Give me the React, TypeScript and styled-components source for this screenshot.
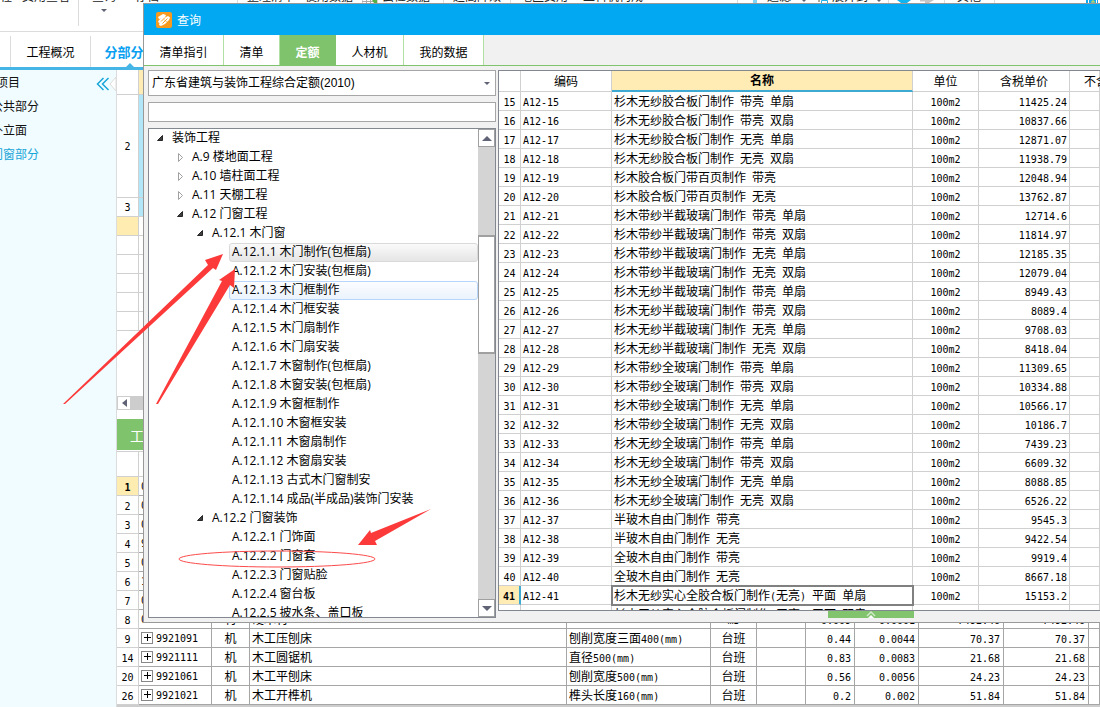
import React from 'react';
import styled, { createGlobalStyle, css } from 'styled-components';

const UI_FONT = '"Liberation Sans", "Noto Sans CJK SC", sans-serif';
const TREE_FONT = '"Open Sans", "Noto Sans CJK SC", sans-serif';
const MONO_FONT = '"DejaVu Sans Mono", "Noto Sans CJK SC", monospace';

const GlobalStyle = createGlobalStyle`
  * { box-sizing: border-box; }
  body { margin: 0; background: #fff; font-family: ${UI_FONT}; font-size: 12px; color: #000; overflow: hidden; }
  button, input, select { font: inherit; color: inherit; margin: 0; }
`;

const Page = styled.div`
  position: relative;
  display: flex;
  flex-direction: column;
  height: 100vh;
  overflow: hidden;
`;

/* ---------- Main window behind the dialog ---------- */

const Ribbon = styled.div`
  display: flex;
  flex: none;
  height: 32px;
  border-bottom: 1px solid #dcdcdc;
  overflow: hidden;
  white-space: nowrap;
`;

const RibbonItem = styled.div<{ $w: number; $line?: boolean }>`
  flex: none;
  width: ${p => p.$w}px;
  height: 26px;
  border-right: ${p => (p.$line ? '1px solid #dcdcdc' : 'none')};
  color: #222;
`;

const RibbonLabel = styled.div`
  height: 16px;
  line-height: 16px;
  margin-top: -11px;
`;

const RibbonArrow = styled.svg`
  display: block;
  margin: 4px 0 0 9px;
`;

const RibbonIcon = styled.svg`
  display: block;
`;

const MainTabs = styled.nav`
  display: flex;
  flex: none;
  height: 38px;
  padding: 4px 0 0 10px;
  border-bottom: 3px solid #45b5e6;
`;

const MainTab = styled.button<{ $active?: boolean }>`
  position: relative;
  width: 80px;
  border: 0;
  border-left: 1px solid #dcdcdc;
  background: #fff;
  padding: 0;
  white-space: nowrap;
  font-size: ${p => (p.$active ? 13 : 12)}px;
  font-weight: ${p => (p.$active ? 700 : 400)};
  color: ${p => (p.$active ? '#0a9ff0' : '#000')};
`;

const TabPointer = styled.svg`
  position: absolute;
  left: 34px;
  bottom: -1px;
`;

const Workspace = styled.div`
  display: flex;
  flex: 1;
  min-height: 0;
`;

const Sidebar = styled.aside`
  position: relative;
  flex: none;
  width: 117px;
  background: #f0fcff;
  border-right: 1px solid #dcdcdc;
  overflow: hidden;
`;

const SideList = styled.ul`
  list-style: none;
  margin: 0;
  padding: 1px 0 0;
`;

const SideItem = styled.li<{ $child?: boolean; $active?: boolean }>`
  height: 24px;
  line-height: 24px;
  margin-left: ${p => (p.$child ? -9 : -28)}px;
  color: ${p => (p.$active ? '#18a6d8' : '#111')};
`;

const CollapseButton = styled.button`
  position: absolute;
  top: 6px;
  right: 0;
  width: 20px;
  height: 16px;
  border: 0;
  padding: 0;
  background: none;
  display: flex;
`;

const Content = styled.main`
  flex: 1;
  min-width: 0;
  overflow: hidden;
`;

const SheetTable = styled.table`
  width: 100%;
  table-layout: fixed;
  border-collapse: separate;
  border-spacing: 0;
  font-family: ${MONO_FONT};
`;

const SheetCell = styled.td<{ $fill?: string; $h?: number }>`
  height: ${p => p.$h ?? 19}px;
  padding: 0;
  border-right: 1px solid #d0d0d0;
  border-bottom: 1px solid #d0d0d0;
  background: ${p => p.$fill ?? '#fff'};
  text-align: center;
  line-height: 16px;
`;

const ScrollRow = styled.div`
  display: flex;
  height: 14px;
  margin-top: 65px;
  background: #cdcdcd;
`;

const ScrollStep = styled.button`
  display: flex;
  align-items: center;
  justify-content: center;
  width: 14px;
  padding: 0;
  border: 1px solid #cdcdcd;
  background: #fff;
`;

const DetailTabs = styled.div`
  display: flex;
  height: 42px;
  padding: 9px 0 1px;
  border-bottom: 1px solid #d0d0d0;
`;

const DetailTab = styled.button`
  width: 96px;
  border: 0;
  padding: 0;
  background: #7fc46c;
  color: #fff;
  font-size: 14px;
`;

const DetailCell = styled.td<{ $align?: string; $num?: boolean; $on?: boolean; $h?: number }>`
  height: ${p => p.$h ?? 19}px;
  padding: 2px ${p => (p.$align === 'right' ? 3 : 2)}px 0;
  border-right: 1px solid ${p => (p.$num ? '#d0d0d0' : '#a6a6a6')};
  border-bottom: 1px solid ${p => (p.$num ? '#d0d0d0' : '#a6a6a6')};
  background: ${p => (p.$on ? '#ffecb0' : '#fff')};
  font-weight: ${p => (p.$on ? 700 : 400)};
  text-align: ${p => p.$align ?? 'left'};
  line-height: 16px;
  white-space: nowrap;
  overflow: hidden;
`;

const CodeBox = styled.div`
  display: flex;
  align-items: center;
  gap: 3px;
  height: 16px;
`;

const PlusBox = styled.svg`
  flex: none;
  margin-bottom: 2px;
`;

const FooterScroll = styled.div`
  height: 14px;
  background: #cdcdcd;
`;

/* ---------- Query dialog ---------- */

const Dialog = styled.section`
  position: absolute;
  top: 3px;
  left: 143px;
  right: 0;
  background: #f1f1f1;
  border: 1px solid #999;
  border-right: 0;
`;

const TitleBar = styled.header`
  display: flex;
  align-items: center;
  gap: 5px;
  height: 31px;
  padding-left: 12px;
  background: #02a8f1;
  color: #fff;
`;

const DialogTabs = styled.nav`
  display: flex;
  height: 31px;
  border-bottom: 1px solid #7fc46c;
`;

const DialogTab = styled.button<{ $w: number; $active?: boolean }>`
  width: ${p => p.$w}px;
  border: 0;
  border-right: 1px solid ${p => (p.$active ? '#7fc46c' : '#b2e0a4')};
  padding: 2px 0 0;
  background: ${p => (p.$active ? '#7fc46c' : '#fff')};
  color: ${p => (p.$active ? '#fff' : '#000')};
  font-weight: ${p => (p.$active ? 700 : 400)};
`;

const Body = styled.div`
  display: flex;
  gap: 2px;
  height: 556px;
  padding: 4px 0 4px 4px;
`;

const LeftPane = styled.div`
  display: flex;
  flex-direction: column;
  flex: none;
  width: 348px;
`;

const SelectWrap = styled.div`
  position: relative;
  height: 26px;
`;

const LibrarySelect = styled.select`
  appearance: none;
  width: 100%;
  height: 26px;
  padding: 0 3px;
  border: 1px solid #a6a6a6;
  border-radius: 0;
  background: #fff;
`;

const SelectArrow = styled.svg`
  position: absolute;
  right: 6px;
  top: 12px;
  pointer-events: none;
`;

const SearchInput = styled.input`
  height: 20px;
  margin: 6px 0;
  border: 1px solid #a6a6a6;
  background: #fff;
`;

const TreeBox = styled.div`
  display: flex;
  flex: 1;
  min-height: 0;
  border: 1px solid #828790;
  background: #fff;
`;

const Tree = styled.ul`
  flex: 1;
  min-width: 0;
  margin: 0;
  padding: 0;
  overflow: hidden;
  list-style: none;
  font-family: ${TREE_FONT};
`;

const TreeRow = styled.li<{ $depth: number }>`
  display: flex;
  align-items: center;
  height: 19px;
  padding-left: ${p => p.$depth * 20 + 6}px;
`;

const Toggle = styled.svg`
  flex: none;
  margin: 0 4px 2px 0;
`;

const TreeLabel = styled.span<{ $state?: string }>`
  flex: 1;
  height: 19px;
  line-height: 15px;
  padding-left: 2px;
  border: 1px solid transparent;
  border-radius: 3px;
  white-space: nowrap;
  ${p => p.$state === 'selected' && css`
    border-color: #d9d9d9;
    background: linear-gradient(#fafafa, #e5e5e5);
  `}
  ${p => p.$state === 'hover' && css`
    border-color: #b8d6fb;
    background: linear-gradient(#fcfdff, #ebf3fd);
  `}
`;

const ScrollBar = styled.div`
  display: flex;
  flex-direction: column;
  flex: none;
  width: 17px;
  background: #d4d4d4;
`;

const ScrollButton = styled.button`
  display: flex;
  align-items: center;
  justify-content: center;
  height: 18px;
  padding: 0;
  border: 1px solid #a0a0a0;
  background: #fff;
`;

const Thumb = styled.div`
  height: 119px;
  margin-top: 88px;
  border: 1px solid #a0a0a0;
  border-width: 2px 1px;
  background: #fff;
`;

const Spacer = styled.div`
  flex: 1;
`;

const RightPane = styled.div`
  display: flex;
  flex-direction: column;
  flex: 1;
  min-width: 0;
`;

const GridBox = styled.div`
  flex: 1;
  min-height: 0;
  overflow: hidden;
  border: 1px solid #828790;
  border-right: 0;
  background: #fff;
`;

const QuotaHead = styled.th<{ $on?: boolean; $cut?: boolean }>`
  height: 21px;
  padding: 2px 0 0 ${p => (p.$cut ? 14 : 0)}px;
  border-right: 1px solid #d0d0d0;
  border-bottom: ${p => (p.$on ? '2px solid #3ea9d2' : '1px solid #d0d0d0')};
  background: ${p => (p.$on ? '#ffecb5' : '#fff')};
  font-weight: ${p => (p.$on ? 700 : 400)};
  text-align: ${p => (p.$cut ? 'left' : 'center')};
  line-height: 17px;
  white-space: nowrap;
`;

const QuotaCell = styled.td<{ $align?: string; $index?: boolean; $focus?: boolean }>`
  height: 19px;
  padding: 2px 2px 0;
  border-right: 1px solid #d0d0d0;
  border-bottom: 1px solid #d0d0d0;
  text-align: ${p => p.$align ?? 'left'};
  line-height: 16px;
  white-space: nowrap;
  ${p => p.$index && css`
    border-right: 2px solid #3ea9d2;
    background: #ffecb5;
    font-weight: 700;
  `}
  ${p => p.$focus && css`
    outline: 2px solid #808080;
    outline-offset: -1px;
  `}
`;

const PaneFooter = styled.div`
  display: flex;
  justify-content: flex-end;
  height: 7px;
  padding-right: 186px;
`;

const ExpandButton = styled.button`
  display: flex;
  justify-content: center;
  width: 86px;
  height: 7px;
  padding: 0;
  border: 0;
  background: #82c46e;
`;

const Markup = styled.svg`
  position: absolute;
  top: 0;
  left: 0;
  pointer-events: none;
`;

const Narrow = styled.span`
  font-size: 10px;
  line-height: 1;
`;

/* Latin runs take half the width of a Chinese character. */
function Mixed({ text }: { text: string }) {
  return (
    <>
      {text.split(/([\x20-\x7e]+)/).map((part, i) =>
        i % 2 ? <Narrow key={i}>{part}</Narrow> : part
      )}
    </>
  );
}

/* ---------- Data ---------- */

type RibbonEntry = { w: number; label?: string; line?: boolean; arrow?: boolean; icon?: string };

const ribbon: RibbonEntry[] = [
  { w: 22, label: '程' },
  { w: 57, label: '费用查看', line: true },
  { w: 13 },
  { w: 43, label: '查询', arrow: true },
  { w: 103, label: '存档', line: true },
  { w: 9 },
  { w: 58, label: '整理清单' },
  { w: 57, label: '使用数据' },
  { w: 20, icon: 'grid' },
  { w: 62, label: '云检数据', line: true },
  { w: 9 },
  { w: 58, label: '超高降效', line: true },
  { w: 9 },
  { w: 63, label: '地区费用' },
  { w: 155, label: '工料机构成', line: true },
  { w: 14 },
  { w: 15, icon: 'bar' },
  { w: 35, label: '过滤' },
  { w: 16, icon: 'down' },
  { w: 14, icon: 'box' },
  { w: 45, label: '展开到' },
  { w: 12, icon: 'down', line: true },
  { w: 7 },
  { w: 23, icon: 'circle' },
  { w: 26, icon: 'forward', line: true },
  { w: 12 },
  { w: 38, label: '其他', line: true },
  { w: 91 },
  { w: 14, icon: 'calc' },
];

const tree: { depth: number; text: string; open?: boolean; leaf?: boolean; state?: string }[] = [
  { depth: 0, text: '装饰工程', open: true },
  { depth: 1, text: 'A.9 楼地面工程' },
  { depth: 1, text: 'A.10 墙柱面工程' },
  { depth: 1, text: 'A.11 天棚工程' },
  { depth: 1, text: 'A.12 门窗工程', open: true },
  { depth: 2, text: 'A.12.1 木门窗', open: true },
  { depth: 3, text: 'A.12.1.1 木门制作(包框扇)', leaf: true, state: 'selected' },
  { depth: 3, text: 'A.12.1.2 木门安装(包框扇)', leaf: true },
  { depth: 3, text: 'A.12.1.3 木门框制作', leaf: true, state: 'hover' },
  { depth: 3, text: 'A.12.1.4 木门框安装', leaf: true },
  { depth: 3, text: 'A.12.1.5 木门扇制作', leaf: true },
  { depth: 3, text: 'A.12.1.6 木门扇安装', leaf: true },
  { depth: 3, text: 'A.12.1.7 木窗制作(包框扇)', leaf: true },
  { depth: 3, text: 'A.12.1.8 木窗安装(包框扇)', leaf: true },
  { depth: 3, text: 'A.12.1.9 木窗框制作', leaf: true },
  { depth: 3, text: 'A.12.1.10 木窗框安装', leaf: true },
  { depth: 3, text: 'A.12.1.11 木窗扇制作', leaf: true },
  { depth: 3, text: 'A.12.1.12 木窗扇安装', leaf: true },
  { depth: 3, text: 'A.12.1.13 古式木门窗制安', leaf: true },
  { depth: 3, text: 'A.12.1.14 成品(半成品)装饰门安装', leaf: true },
  { depth: 2, text: 'A.12.2 门窗装饰', open: true },
  { depth: 3, text: 'A.12.2.1 门饰面', leaf: true },
  { depth: 3, text: 'A.12.2.2 门窗套', leaf: true },
  { depth: 3, text: 'A.12.2.3 门窗贴脸', leaf: true },
  { depth: 3, text: 'A.12.2.4 窗台板', leaf: true },
  { depth: 3, text: 'A.12.2.5 披水条、盖口板', leaf: true },
];

const quotas: [number, string, string][] = [
  [15, '杉木无纱胶合板门制作 带亮 单扇', '11425.24'],
  [16, '杉木无纱胶合板门制作 带亮 双扇', '10837.66'],
  [17, '杉木无纱胶合板门制作 无亮 单扇', '12871.07'],
  [18, '杉木无纱胶合板门制作 无亮 双扇', '11938.79'],
  [19, '杉木胶合板门带百页制作 带亮', '12048.94'],
  [20, '杉木胶合板门带百页制作 无亮', '13762.87'],
  [21, '杉木带纱半截玻璃门制作 带亮 单扇', '12714.6'],
  [22, '杉木带纱半截玻璃门制作 带亮 双扇', '11814.97'],
  [23, '杉木带纱半截玻璃门制作 无亮 单扇', '12185.35'],
  [24, '杉木带纱半截玻璃门制作 无亮 双扇', '12079.04'],
  [25, '杉木无纱半截玻璃门制作 带亮 单扇', '8949.43'],
  [26, '杉木无纱半截玻璃门制作 带亮 双扇', '8089.4'],
  [27, '杉木无纱半截玻璃门制作 无亮 单扇', '9708.03'],
  [28, '杉木无纱半截玻璃门制作 无亮 双扇', '8418.04'],
  [29, '杉木带纱全玻璃门制作 带亮 单扇', '11309.65'],
  [30, '杉木带纱全玻璃门制作 带亮 双扇', '10334.88'],
  [31, '杉木带纱全玻璃门制作 无亮 单扇', '10566.17'],
  [32, '杉木带纱全玻璃门制作 无亮 双扇', '10186.7'],
  [33, '杉木无纱全玻璃门制作 带亮 单扇', '7439.23'],
  [34, '杉木无纱全玻璃门制作 带亮 双扇', '6609.32'],
  [35, '杉木无纱全玻璃门制作 无亮 单扇', '8088.85'],
  [36, '杉木无纱全玻璃门制作 无亮 双扇', '6526.22'],
  [37, '半玻木自由门制作 带亮', '9545.3'],
  [38, '半玻木自由门制作 无亮', '9422.54'],
  [39, '全玻木自由门制作 带亮', '9919.4'],
  [40, '全玻木自由门制作 无亮', '8667.18'],
  [41, '杉木无纱实心全胶合板门制作(无亮) 平面 单扇', '15153.2'],
  [42, '杉木无纱实心全胶合板门制作(无亮) 平面 双扇', '14120.6'],
];

const details: string[][] = [
  ['1', '0000010'],
  ['2', '0305111'],
  ['3', '0351001'],
  ['4', '9946131'],
  ['5', '0503051'],
  ['6', '1103241'],
  ['7', '0501281'],
  ['8', '0503200', '材', '硬木材', '', 'm3', '0.009', '0.0001', '7492.46', '7492.46'],
  ['9', '9921091', '机', '木工压刨床', '刨削宽度三面400(mm)', '台班', '0.44', '0.0044', '70.37', '70.37'],
  ['14', '9921111', '机', '木工圆锯机', '直径500(mm)', '台班', '0.83', '0.0083', '21.68', '21.68'],
  ['20', '9921061', '机', '木工平刨床', '刨削宽度500(mm)', '台班', '0.56', '0.0056', '24.23', '24.23'],
  ['26', '9921021', '机', '木工开榫机', '榫头长度160(mm)', '台班', '0.2', '0.002', '51.84', '51.84'],
];

/* ---------- Parts ---------- */

function RibbonGlyph({ kind }: { kind: string }) {
  return (
    <RibbonIcon width="16" height="4">
      {kind === 'grid' && (
        <>
          <path d="M0 0V3.5H15V0M0 1.5H15M4.5 0V3M8.5 0V3" fill="none" stroke="#aaa" />
          <path d="M10 0h5v3h-3z" fill="#5aae46" />
        </>
      )}
      {kind === 'bar' && <path d="M1 0h4v3H1z" fill="#7fd4f7" />}
      {kind === 'down' && <path d="M0 0h4L2 2z" fill="#5f6375" />}
      {kind === 'box' && (
        <>
          <path d="M0 0h2v2H0z" fill="#b5a896" />
          <path d="M3.5 3V.5h6V3" fill="none" stroke="#22b2ea" />
        </>
      )}
      {kind === 'circle' && <path d="M1 0h14l-4 3H5z" fill="#10b4f0" />}
      {kind === 'forward' && <path d="M1 0h14l-5 3H6V1.5H1z" fill="#c4c4c4" />}
      {kind === 'calc' && (
        <>
          <path d="M0 0h12v3H0z" fill="#10a8f0" />
          <path d="M2 0h1v3H2zM10 0h1v3h-1z" fill="#fff" />
          <path d="M5 2h4M7 0v2" stroke="#e8e03c" />
        </>
      )}
    </RibbonIcon>
  );
}

function TreeToggle({ open }: { open?: boolean }) {
  return (
    <Toggle width="10" height="10" viewBox="0 0 10 10">
      {open ? (
        <path d="M7.5 2.5V7.5H2.5Z" fill="#404040" stroke="#262626" />
      ) : (
        <path d="M3.5 1.5L7.5 5.5L3.5 9.5Z" fill="#fff" stroke="#a0a0a0" />
      )}
    </Toggle>
  );
}

function Logo() {
  return (
    <svg width="16" height="16" viewBox="0 0 16 16" aria-hidden="true">
      <rect width="16" height="16" rx="2" fill="#f79a1e" />
      <path d="M2 5L7 2L10 3L9 5.500L12 4L14 5.500L13 8L9 12L5 14L3 13L3.500 11L2 10L3 8L5 6.500L3 7Z" fill="#fff" />
      <path d="M5 9.500L9 5.500M6.500 11.500L11.500 6.500M8.500 8L10.500 9.500" fill="none" stroke="#f79a1e" />
    </svg>
  );
}

function DetailRow({ row }: { row: string[] }) {
  const [no, code, kind = '', name = '', spec = '', unit = '', use = '', qty = '', price = '', market = ''] = row;
  const expandable = kind === '机';
  return (
    <tr>
      <DetailCell $num $align="center" $on={no === '1'}><Mixed text={no} /></DetailCell>
      <DetailCell>
        <CodeBox>
          {expandable && (
            <PlusBox width="12" height="12" aria-hidden="true">
              <rect x=".5" y=".5" width="11" height="11" fill="#fff" stroke="#888" />
              <path d="M3 5.5h7M6.500 2v7" stroke="#000" />
            </PlusBox>
          )}
          <Mixed text={code} />
        </CodeBox>
      </DetailCell>
      <DetailCell $align="center">{kind}</DetailCell>
      <DetailCell>{name}</DetailCell>
      <DetailCell><Mixed text={spec} /></DetailCell>
      <DetailCell $align="center"><Mixed text={unit} /></DetailCell>
      <DetailCell />
      <DetailCell $align="right"><Mixed text={use} /></DetailCell>
      <DetailCell $align="right"><Mixed text={qty} /></DetailCell>
      <DetailCell $align="right"><Mixed text={price} /></DetailCell>
      <DetailCell $align="right"><Mixed text={market} /></DetailCell>
      <DetailCell />
    </tr>
  );
}

function MainWindow() {
  return (
    <>
      <Ribbon>
        {ribbon.map((r, i) => (
          <RibbonItem key={i} $w={r.w} $line={r.line}>
            {r.label && <RibbonLabel>{r.label}</RibbonLabel>}
            {r.icon && <RibbonGlyph kind={r.icon} />}
            {r.arrow && <RibbonArrow width="6" height="3"><path d="M0 0h6L3 3z" fill="#5f6375" /></RibbonArrow>}
          </RibbonItem>
        ))}
      </Ribbon>
      <MainTabs>
        <MainTab>工程概况</MainTab>
        <MainTab $active>
          分部分项
          <TabPointer width="10" height="5"><path d="M0 5L5 0L10 5z" fill="#45b5e6" /></TabPointer>
        </MainTab>
      </MainTabs>
      <Workspace>
        <Sidebar>
          <SideList>
            <SideItem>工程项目</SideItem>
            <SideItem $child>公共部分</SideItem>
            <SideItem $child>外立面</SideItem>
            <SideItem $child $active>门窗部分</SideItem>
          </SideList>
          <CollapseButton aria-label="收起">
            <svg width="20" height="16">
              <path d="M7.5 2L1.5 8L7.5 14M12.5 2L6.5 8L12.5 14" fill="none" stroke="#18a6d8" strokeWidth="1.5" />
              <path d="M20 1L14 8L20 15z" fill="#fff" stroke="#dcdcdc" />
            </svg>
          </CollapseButton>
        </Sidebar>
        <Content>
          <SheetTable>
            <colgroup><col width="22" /><col /></colgroup>
            <tbody>
              <tr><SheetCell $h={25} /><SheetCell $h={25} $fill="#ffecb5" /></tr>
              <tr><SheetCell $h={103}><Mixed text="2" /></SheetCell><SheetCell $fill="#b0e6f8" /></tr>
              <tr><SheetCell><Mixed text="3" /></SheetCell><SheetCell $fill="#b0e6f8" /></tr>
              <tr><SheetCell $fill="#ffecb0" /><SheetCell /></tr>
              {[1, 2, 3, 4, 5].map(n => (
                <tr key={n}><SheetCell /><SheetCell /></tr>
              ))}
            </tbody>
          </SheetTable>
          <ScrollRow>
            <ScrollStep aria-label="向左滚动">
              <svg width="5" height="8"><path d="M5 0v8L0 4z" fill="#5f6375" /></svg>
            </ScrollStep>
          </ScrollRow>
          <DetailTabs><DetailTab>工料机显示</DetailTab></DetailTabs>
          <SheetTable>
            <colgroup>
              {[22, 73, 38, 317, 144, 46, 49, 49, 64, 85, 85].map((w, i) => <col key={i} width={w} />)}
              <col />
            </colgroup>
            <tbody>
              <tr>
                {Array.from({ length: 12 }, (_, i) => <DetailCell key={i} $num $h={25} />)}
              </tr>
              {details.map(row => <DetailRow key={row[0]} row={row} />)}
            </tbody>
          </SheetTable>
          <FooterScroll />
        </Content>
      </Workspace>
    </>
  );
}

function QuotaGrid() {
  return (
    <GridBox>
      <SheetTable>
        <colgroup>
          {[22, 91, 301, 66, 91].map((w, i) => <col key={i} width={w} />)}
          <col />
        </colgroup>
        <thead>
          <tr>
            <QuotaHead />
            <QuotaHead>编码</QuotaHead>
            <QuotaHead $on>名称</QuotaHead>
            <QuotaHead>单位</QuotaHead>
            <QuotaHead>含税单价</QuotaHead>
            <QuotaHead $cut>不含税单价</QuotaHead>
          </tr>
        </thead>
        <tbody>
          {quotas.map(([no, name, price]) => (
            <tr key={no}>
              <QuotaCell $align="center" $index={no === 41}><Mixed text={String(no)} /></QuotaCell>
              <QuotaCell><Mixed text={`A12-${no}`} /></QuotaCell>
              <QuotaCell $focus={no === 41}><Mixed text={name} /></QuotaCell>
              <QuotaCell $align="center"><Mixed text="100m2" /></QuotaCell>
              <QuotaCell $align="right"><Mixed text={price} /></QuotaCell>
              <QuotaCell />
            </tr>
          ))}
        </tbody>
      </SheetTable>
    </GridBox>
  );
}

function QueryDialog() {
  return (
    <Dialog role="dialog" aria-label="查询">
      <TitleBar><Logo />查询</TitleBar>
      <DialogTabs>
        <DialogTab $w={80}>清单指引</DialogTab>
        <DialogTab $w={56}>清单</DialogTab>
        <DialogTab $w={56} $active>定额</DialogTab>
        <DialogTab $w={68}>人材机</DialogTab>
        <DialogTab $w={80}>我的数据</DialogTab>
      </DialogTabs>
      <Body>
        <LeftPane>
          <SelectWrap>
            <LibrarySelect aria-label="定额库">
              <option>广东省建筑与装饰工程综合定额(2010)</option>
            </LibrarySelect>
            <SelectArrow width="6" height="3"><path d="M0 0h6L3 3z" fill="#5f6375" /></SelectArrow>
          </SelectWrap>
          <SearchInput type="text" aria-label="搜索" />
          <TreeBox>
            <Tree>
              {tree.map(n => (
                <TreeRow key={n.text} $depth={n.leaf ? n.depth + 0.7 : n.depth}>
                  {!n.leaf && <TreeToggle open={n.open} />}
                  <TreeLabel $state={n.state}>{n.text}</TreeLabel>
                </TreeRow>
              ))}
            </Tree>
            <ScrollBar>
              <ScrollButton aria-label="向上滚动">
                <svg width="10" height="5"><path d="M0 5h10L5 0z" fill="#5f6375" /></svg>
              </ScrollButton>
              <Thumb />
              <Spacer />
              <ScrollButton aria-label="向下滚动">
                <svg width="10" height="5"><path d="M0 0h10L5 5z" fill="#5f6375" /></svg>
              </ScrollButton>
            </ScrollBar>
          </TreeBox>
        </LeftPane>
        <RightPane>
          <QuotaGrid />
          <PaneFooter>
            <ExpandButton aria-label="展开">
              <svg width="10" height="7">
                <path d="M1 5L5 1L9 5" fill="none" stroke="#cfe9c6" strokeWidth="1.5" />
                <path d="M2 7L5 4L8 7z" fill="#fff" />
              </svg>
            </ExpandButton>
          </PaneFooter>
        </RightPane>
      </Body>
    </Dialog>
  );
}

export default function App() {
  return (
    <Page>
      <GlobalStyle />
      <MainWindow />
      <QueryDialog />
      <Markup width="440" height="580" aria-hidden="true">
        <g fill="#fd3a3a">
          <path d="M63 404L208 265L205 260L223 254L216 270L213 268L65 404Z" />
          <path d="M156 404L222 281L219 280L235 269L234 288L230 285L158 404Z" />
          <path d="M431 509L371 533L370 530L358 545L377 545L375 541Z" />
        </g>
        <ellipse cx="277" cy="559" rx="98" ry="8" fill="none" stroke="#fd4a4a" />
      </Markup>
    </Page>
  );
}
